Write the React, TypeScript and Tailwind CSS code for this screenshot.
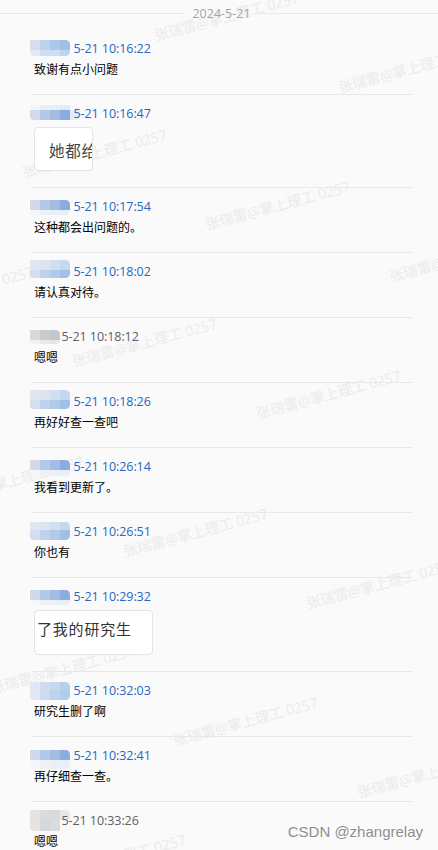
/**
 * Chat History
 * Message log of one day with masked sender names and a tiled watermark
 */

interface Patch {
  top: number;
  height: number;
  colors: string[];
}

interface Message {
  time: string;
  text?: string;
  image?: 'narrow' | 'wide';
  own: boolean;
  mask: Patch[];
}

const STRONG = ['#d3d9ea', '#b1cae9', '#a5bbe2', '#87aede'];
const SOFT = ['#e1e7f2', '#dce4f2', '#d1dff0', '#c4d8f0'];
const MEDIUM = ['#d4deef', '#bfd1ec', '#b2c9ea', '#a1c0e6'];
const FAINT = ['#f5f6fa', '#eef1f8', '#ebeff8', '#e8eff8'];

const messages: Message[] = [
  {
    time: '5-21 10:16:22',
    text: '致谢有点小问题',
    own: true,
    mask: [
      { top: 10, height: 10, colors: ['#d5ddee', '#bfd2ec', '#abc8e8', '#9fbfe5'] },
      { top: 20, height: 6, colors: ['#e4e9f4', '#d1ddf0', '#cdddf2', '#bdd4f0'] },
    ],
  },
  {
    time: '5-21 10:16:47',
    image: 'narrow',
    own: true,
    mask: [
      { top: 10, height: 5, colors: ['#f3f5f9', '#eaeff6', '#e8eef6', '#e2eaf5', '#f4f7fb'] },
      { top: 15, height: 10, colors: [...STRONG, '#e5edf6'] },
    ],
  },
  {
    time: '5-21 10:17:54',
    text: '这种都会出问题的。',
    own: true,
    mask: [
      { top: 12, height: 10, colors: STRONG },
      { top: 22, height: 5, colors: FAINT },
    ],
  },
  {
    time: '5-21 10:18:02',
    text: '请认真对待。',
    own: true,
    mask: [
      { top: 7, height: 10, colors: SOFT },
      { top: 17, height: 8, colors: MEDIUM },
    ],
  },
  {
    time: '5-21 10:18:12',
    text: '嗯嗯',
    own: false,
    mask: [
      { top: 12, height: 10, colors: ['#dcd8d4', '#cbcbca', '#c2c7ca'] },
      { top: 22, height: 4, colors: ['#f0f0f1', '#e6e8ea', '#e4e7ea'] },
    ],
  },
  {
    time: '5-21 10:18:26',
    text: '再好好查一查吧',
    own: true,
    mask: [
      { top: 7, height: 10, colors: SOFT },
      { top: 17, height: 9, colors: MEDIUM },
    ],
  },
  {
    time: '5-21 10:26:14',
    text: '我看到更新了。',
    own: true,
    mask: [
      { top: 12, height: 10, colors: STRONG },
      { top: 22, height: 6, colors: FAINT },
    ],
  },
  {
    time: '5-21 10:26:51',
    text: '你也有',
    own: true,
    mask: [
      { top: 9, height: 8, colors: SOFT },
      { top: 17, height: 10, colors: MEDIUM },
    ],
  },
  {
    time: '5-21 10:29:32',
    image: 'wide',
    own: true,
    mask: [
      { top: 12, height: 10, colors: STRONG },
      { top: 22, height: 5, colors: FAINT },
    ],
  },
  {
    time: '5-21 10:32:03',
    text: '研究生删了啊',
    own: true,
    mask: [
      { top: 10, height: 8, colors: ['#e1e7f3', '#cfddf0', '#c5d9ef', '#b5d0ec'] },
      { top: 18, height: 10, colors: ['#e3e9f4', '#ccdbf0', '#bed2ed', '#b2cbea'] },
    ],
  },
  {
    time: '5-21 10:32:41',
    text: '再仔细查一查。',
    own: true,
    mask: [
      { top: 13, height: 10, colors: STRONG },
      { top: 23, height: 9, colors: FAINT },
    ],
  },
  {
    time: '5-21 10:33:26',
    text: '嗯嗯',
    own: false,
    mask: [
      { top: 8, height: 10, colors: ['#e6e3e2', '#d9dcde', '#d8dbde', '#e6e8eb'] },
      { top: 18, height: 11, colors: ['#e6e4e2', '#d4d8db', '#d9dce0'] },
    ],
  },
];

// origin = left end of the text baseline
const watermarks = [
  [156, 41],
  [340, 93],
  [24, 178],
  [207, 230],
  [391, 282],
  [-109, 315],
  [74, 367],
  [258, 419],
  [-59, 505],
  [125, 557],
  [308, 609],
  [-8, 694],
  [175, 746],
  [359, 798],
  [43, 883],
];

function Watermark() {
  return (
    <svg className="pointer-events-none absolute inset-0" width="438" height="850">
      {watermarks.map(([x, y]) => (
        <text
          key={`${x}-${y}`}
          transform={`translate(${x} ${y}) rotate(-15)`}
          textLength={149}
          className="fill-[#ebebec] font-['Open_Sans','Noto_Sans_CJK_SC',sans-serif] text-[14.5px]"
        >
          张瑞雷@掌上理工 0257
        </text>
      ))}
    </svg>
  );
}

function NameMask({ patches, index }: { patches: Patch[]; index: number }) {
  const top = patches[0].top;
  const width = Math.max(...patches.map(p => p.colors.length)) * 10;
  const height = patches.reduce((sum, p) => sum + p.height, 0);

  return (
    <svg className="absolute top-0 -left-1" width="50" height="36">
      <clipPath id={`mask-${index}`}>
        <path d={`M0 ${top}h${width - 5}q5 0 5 5v${height - 10}q0 5 -5 5h-${width - 9}q-4 0 -4 -4z`} />
      </clipPath>
      <g clipPath={`url(#mask-${index})`} shapeRendering="crispEdges">
        {patches.map(patch =>
          patch.colors.map((color, i) => (
            <rect
              key={`${patch.top}-${i}`}
              x={i * 10}
              y={patch.top}
              width="10"
              height={patch.height}
              fill={color}
            />
          ))
        )}
      </g>
    </svg>
  );
}

function ImageBubble({ size }: { size: 'narrow' | 'wide' }) {
  if (size === 'narrow') {
    return (
      <div className="flex h-[44px] w-[59px] items-center overflow-hidden rounded border border-[#e4e4e4] bg-white pt-1.5 pl-[14px] text-[15.5px] leading-none tracking-[0.8px] whitespace-nowrap text-[#444]">
        她都给
      </div>
    );
  }
  return (
    <div className="flex h-[45px] w-[119px] items-center overflow-hidden rounded border border-[#e4e4e4] bg-white pb-1.5 pl-0.5 text-[15px] leading-none tracking-[0.8px] whitespace-nowrap text-[#333]">
      了我的研究生
    </div>
  );
}

function MessageRow({ message, index }: { message: Message; index: number }) {
  return (
    <li
      className={`mr-[26px] ml-8 shrink-0 border-b border-[#e8e8e9] pl-0.5 ${
        message.image === 'narrow' ? 'h-[93px]' : message.image === 'wide' ? 'h-[94px]' : 'h-[65px]'
      }`}
    >
      <div
        className={`relative flex h-8 items-end pb-[3px] text-[12.5px] leading-[20px] tracking-[-0.07px] ${
          message.own ? 'pl-[39.5px] text-[#2667c2]' : 'pl-[27.5px] text-[#5c6066]'
        }`}
      >
        <NameMask patches={message.mask} index={index} />
        <time className="relative whitespace-nowrap">{message.time}</time>
      </div>
      {message.image ? (
        <ImageBubble size={message.image} />
      ) : (
        <p className="text-[12px] leading-4 text-black">{message.text}</p>
      )}
    </li>
  );
}

export default function App() {
  return (
    <div className="relative h-[850px] w-[438px] overflow-hidden bg-[#fafafa] font-['Open_Sans','Noto_Sans_CJK_SC',sans-serif]">
      <Watermark />
      <div className="relative flex h-full flex-col">
        <header className="flex h-[30px] shrink-0 items-start">
          <div className="mt-[13px] h-px w-[184px] bg-[#e8e8e9]" />
          <span className="w-[75px] pt-[5px] text-center text-[12.5px] leading-[18px] text-[#a4a5a8]">
            2024-5-21
          </span>
          <div className="mt-[13px] h-px flex-1 bg-[#e8e8e9]" />
        </header>
        <ul className="flex flex-col">
          {messages.map((message, index) => (
            <MessageRow key={message.time} message={message} index={index} />
          ))}
        </ul>
      </div>
      <div className="absolute right-[15px] bottom-2 font-['Liberation_Sans',Arial,sans-serif] text-[15px] leading-5 text-[#8e8e8e] [text-shadow:-1px_-1px_0_#fff]">
        CSDN @zhangrelay
      </div>
    </div>
  );
}
